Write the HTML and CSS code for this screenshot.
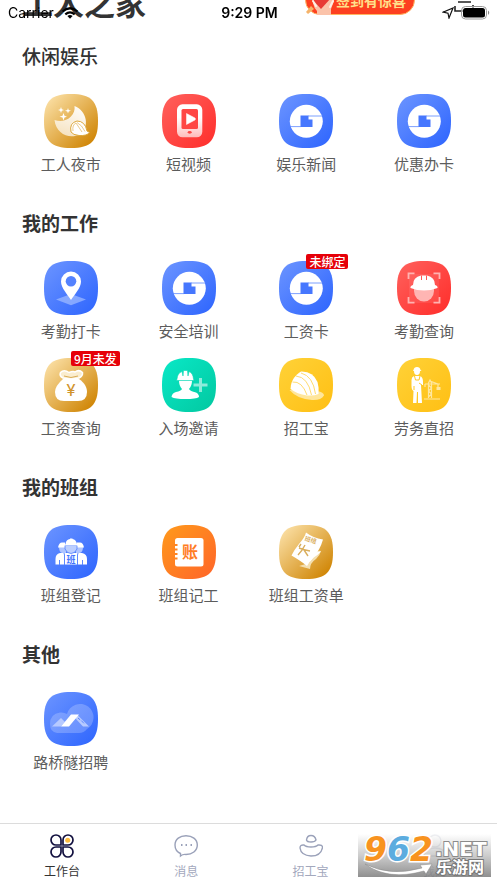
FILE: index.html
```html
<!DOCTYPE html>
<html lang="zh-CN">
<head>
  <meta charset="UTF-8">
  <meta name="viewport" content="width=device-width, initial-scale=1.0">
  <title>工人之家</title>
  <link rel="stylesheet" href="styles.css">
</head>
<body>

  <!-- Shared gradients and shapes -->
  <svg class="defs" aria-hidden="true">
    <defs>
      <linearGradient id="blue" x1="0" y1="0" x2="1" y2="1"><stop offset="0.1" stop-color="#6690ff"/><stop offset="0.9" stop-color="#3369fe"/></linearGradient>
      <linearGradient id="gold" x1="0" y1="0" x2="1" y2="1"><stop offset="0.1" stop-color="#f9dc9f"/><stop offset="0.9" stop-color="#d08606"/></linearGradient>
      <linearGradient id="red" x1="0" y1="0" x2="1" y2="1"><stop offset="0.1" stop-color="#ff5c58"/><stop offset="0.9" stop-color="#ff322f"/></linearGradient>
      <linearGradient id="green" x1="0" y1="0" x2="1" y2="1"><stop offset="0.1" stop-color="#08e5c3"/><stop offset="0.9" stop-color="#03cba4"/></linearGradient>
      <linearGradient id="yellow" x1="0" y1="0" x2="1" y2="1"><stop offset="0.1" stop-color="#ffd034"/><stop offset="0.9" stop-color="#ffc117"/></linearGradient>
      <linearGradient id="orange" x1="0" y1="0" x2="1" y2="1"><stop offset="0.1" stop-color="#ff951d"/><stop offset="0.9" stop-color="#ff6a28"/></linearGradient>
      <linearGradient id="fadeDown" x1="0" y1="0" x2="0" y2="1"><stop offset="0.4" stop-color="#fff"/><stop offset="1" stop-color="#fff" stop-opacity="0.65"/></linearGradient>
      <linearGradient id="fadeMoon" x1="1" y1="0" x2="0" y2="1"><stop offset="0" stop-color="#fff"/><stop offset="1" stop-color="#fff" stop-opacity="0.6"/></linearGradient>
      <linearGradient id="shade" x1="0" y1="0" x2="0" y2="1"><stop offset="0" stop-color="#fff"/><stop offset="0.5" stop-color="#c4c4c4"/><stop offset="1" stop-color="#7c7c7c"/></linearGradient>
      <path id="tile" d="M27 0C47 0 54 7 54 27S47 54 27 54 0 47 0 27 7 0 27 0Z"/>
      <g id="logo">
        <use href="#tile" fill="url(#blue)"/>
        <circle cx="27.3" cy="27.3" r="16.500" fill="#fff"/>
        <path d="M21.500 21.500H29.500V25.500H33.500V33H21.500Z" fill="#4677fe"/>
        <path d="M29 22H43.500M11 32.600H22" stroke="#5c88fe" stroke-width="0.800"/>
      </g>
    </defs>
  </svg>

  <!-- Phone status bar -->
  <div class="status">
    <div class="status-left">
      <span>Carrier</span>
      <svg width="18" height="12" viewBox="0 0 18 12" fill="none" stroke="#000" stroke-width="2.200"><path d="M1.500 4.500Q9-2 16.500 4.500M4.300 7.400Q9 3.500 13.700 7.400"/><path d="M6.400 9L9 11.800 11.600 9Q9 7 6.400 9Z" fill="#000" stroke="none"/></svg>
    </div>
    <span class="status-time">9:29 PM</span>
    <div class="status-right">
      <svg width="12" height="12" viewBox="0 0 12 12" fill="none" stroke="#111" stroke-width="1.200"><path d="M11 1L7 11 6 6.200 1 5.200Z"/></svg>
      <svg width="30" height="14" viewBox="0 0 30 14"><rect x="0.500" y="0.500" width="25" height="12.500" rx="4" fill="#fff" fill-opacity="0.5" stroke="#999"/><rect x="2" y="2" width="22" height="9.500" rx="2.500"/><path d="M27 4.500Q29.500 6.700 27 9Z" fill="#888"/></svg>
    </div>
  </div>

  <!-- Header, scrolled under the status bar -->
  <header class="header">
    <h1>工人之家</h1>
    <a class="sign" href="#sign">
      <svg class="sign-hand" width="30" height="30" viewBox="0 0 30 30"><path d="M0 27L5 21 8 24 2 29Z" fill="#f5b36a"/><path d="M7 18Q8 23 11 26V30H25V24L28 16 22 12Z" fill="#fbc3aa"/><path d="M5 13L15 24 25 13Z" fill="#e83a35"/><path d="M7 16L10 21M27 16L24 22" stroke="#fff0e5" stroke-width="2" stroke-linecap="round"/></svg>
      <span>签到有惊喜</span>
    </a>
    <button class="scan" type="button" aria-label="扫一扫">
      <svg width="36" height="20" viewBox="0 0 36 20" fill="none" stroke="#222" stroke-width="1.600"><path d="M5 8H18M2 12V17H12M20 11V17"/></svg>
    </button>
  </header>

  <main>
    <section class="section">
      <h2 class="light">休闲娱乐</h2>
      <div class="grid">
        <a class="item" href="#night">
          <svg class="icon" viewBox="0 0 54 54"><use href="#tile" fill="url(#gold)"/><path d="M30.500 12C43 17 46 33 36 40 26 46 12 40 10.500 26 21 30 32 22 30.500 12Z" fill="url(#fadeMoon)"/><path d="M17 13L17.800 15.200 20 16 17.800 16.700 17 19 16.200 16.700 14 16 16.200 15.200ZM24 14L24.700 16 27 16.700 24.700 17.400 24 19.500 23.300 17.400 21 16.700 23.300 16ZM19.500 19L20.500 21.800 23 22.700 20.500 23.600 19.500 26.500 18.500 23.600 15.500 22.700 18.500 21.800Z" fill="#fff"/><path d="M27 38Q25 29 33 27 41 27 43 37L45.500 38.500Q43 42 35 41.500 29 41 27 38Z" fill="#fff" stroke="#dda83d"/><path d="M29 37Q28 31 32 29L38 38M33 28.500Q38 31 41 37.500" fill="none" stroke="#e5be70" stroke-width="0.800"/></svg>
          <span>工人夜市</span>
        </a>
        <a class="item" href="#video">
          <svg class="icon" viewBox="0 0 54 54"><use href="#tile" fill="url(#red)"/><rect x="15" y="10.300" width="25.300" height="33" rx="5.500" fill="url(#fadeDown)"/><rect x="19.500" y="15" width="16.500" height="20" rx="1.500" fill="#ff4744"/><path d="M24.500 19.500V30.500L33 26Q34 25 33 24Z" fill="#fff" stroke="#fff" stroke-linejoin="round" stroke-width="0.500"/><ellipse cx="27.700" cy="38.300" rx="2" ry="1.400" fill="#ff4744"/></svg>
          <span>短视频</span>
        </a>
        <a class="item" href="#news">
          <svg class="icon" viewBox="0 0 54 54"><use href="#logo"/></svg>
          <span>娱乐新闻</span>
        </a>
        <a class="item" href="#offers">
          <svg class="icon" viewBox="0 0 54 54"><use href="#logo"/></svg>
          <span>优惠办卡</span>
        </a>
      </div>
    </section>

    <section class="section">
      <h2>我的工作</h2>
      <div class="grid">
        <a class="item" href="#checkin">
          <svg class="icon" viewBox="0 0 54 54"><use href="#tile" fill="url(#blue)"/><path d="M12 38.500L27 33 42 38.500 27 44.300Z" fill="#a3bdff" opacity="0.700"/><path d="M27 10.500A10 10 0 0 1 37 20.500C37 27 30 34 27 39 24 34 17 27 17 20.500A10 10 0 0 1 27 10.500Z" fill="#fff"/><circle cx="27" cy="20.300" r="5.300" fill="#5482fe"/></svg>
          <span>考勤打卡</span>
        </a>
        <a class="item" href="#training">
          <svg class="icon" viewBox="0 0 54 54"><use href="#logo"/></svg>
          <span>安全培训</span>
        </a>
        <a class="item" href="#card">
          <svg class="icon" viewBox="0 0 54 54"><use href="#logo"/></svg>
          <b class="badge">未绑定</b>
          <span>工资卡</span>
        </a>
        <a class="item" href="#attendance">
          <svg class="icon" viewBox="0 0 54 54"><use href="#tile" fill="url(#red)"/><rect x="12" y="13" width="30" height="29" fill="#fff" opacity="0.080"/><path d="M11.500 18V12.300H17.500M36.500 12.300H42.500V18M42.500 36V41.700H36.500M17.500 41.700H11.500V36" fill="none" stroke="#ffb3b1" stroke-width="1.800"/><path d="M17 28H37V30A10 10.500 0 0 1 17 30Z" fill="#ffb5b3"/><path d="M16 24Q16 16 24 14.500H30Q38 16 38 24 41 25 40.500 27 34 29.500 27 29.500T13.500 27Q13 25 16 24Z" fill="#fff"/><path d="M24.500 14.500V19M29.500 14.500V19" stroke="#ff5754"/></svg>
          <span>考勤查询</span>
        </a>
        <a class="item" href="#wages">
          <svg class="icon" viewBox="0 0 54 54"><use href="#tile" fill="url(#gold)"/><path d="M19 21H35C41 25 43 30 43 34Q43 43 34 43H20Q11 43 11 34 11 28 19 21Z" fill="#fff"/><path d="M19 20Q15 18 16.500 14.500 20 11 25 14.500 29 13 31 14 35 11 38.500 14.500 39 18 35 20 27 22 19 20Z" fill="#faedcf" stroke="#fff" stroke-width="1.500"/><path d="M20 18Q27 21 34 18" fill="none" stroke="#d9ac56"/><text class="yen" x="27" y="38">¥</text></svg>
          <b class="badge">9月未发</b>
          <span>工资查询</span>
        </a>
        <a class="item" href="#invite">
          <svg class="icon" viewBox="0 0 54 54"><use href="#tile" fill="url(#green)"/><path d="M17 22.500H30Q30 28 27 31 28 33 34 34.500 37 36 37 39 34 41 23.500 41T9.500 39Q10 35 14 34 19 33 20 31 17 28 17 22.500Z" fill="#fff"/><path d="M15 21Q15.500 15 20 13.500L21 18 21.500 12.500H25.500L26 18 27 13.500Q31 15 31.500 21L32 22.500H14.500Z" fill="#fff" stroke="#09d9b6" stroke-width="0.600"/><path d="M38.500 20V34M31.500 27H45.500" stroke="#fff" stroke-width="3" opacity="0.550"/></svg>
          <span>入场邀请</span>
        </a>
        <a class="item" href="#recruit">
          <svg class="icon" viewBox="0 0 54 54"><use href="#tile" fill="url(#yellow)"/><path d="M10.500 32Q24 32 38 33 45 34 45 37.500 42 42.500 33 42 18 41 10.500 32Z" fill="#ffe69b"/><path d="M11.500 31C12 21 17 17 22 13.500Q34 13 38.500 24 40 29 39.500 36 35 38 28 37.500 18 36 11.500 31Z" fill="#fff"/><path d="M13.500 24Q23 23 28 37M17 18Q29 19 32.500 37M22 15Q34 18 36.500 36" fill="none" stroke="#ffdb70"/></svg>
          <span>招工宝</span>
        </a>
        <a class="item" href="#labour">
          <svg class="icon" viewBox="0 0 54 54"><use href="#tile" fill="url(#yellow)"/><path d="M16.500 12Q17 9 20 9T23.500 12L24.500 13H23Q23 17 20 17T17 13H16Z" fill="#fff"/><path d="M17 18H23Q26 19 26 24V27L24 27 25 45H21V34H20L19.500 45H16L16.500 33Q14.500 32 14.500 28V22Q14.500 19 17 18Z" fill="#fff"/><path d="M17.500 18L18.500 22H22L23 18M17 28V32M22 25L25 27" fill="none" stroke="#ffc928"/><path d="M27 41H43M31.500 40V25L33 22 34.500 25V40M28 26H43M31.500 27L34.500 30 31.500 33 34.500 36 31.500 39M28 26V29M41 26V29M33 23L41 26" fill="none" stroke="#ffe79f" stroke-width="1.200"/><path d="M39.500 29H43.500V32H39.500Z" fill="#ffe79f"/></svg>
          <span>劳务直招</span>
        </a>
      </div>
    </section>

    <section class="section">
      <h2>我的班组</h2>
      <div class="grid">
        <a class="item" href="#team">
          <svg class="icon" viewBox="0 0 54 54"><use href="#tile" fill="url(#blue)"/><path d="M15 22H22V28H18Q15 27 15 22ZM32 22H39Q39 27 36 28H32Z" fill="#afc5ff"/><path d="M14 22.500Q15 17.500 18 17.500H21V22.500ZM40 22.500Q39 17.500 36 17.500H33V22.500ZM11.500 39.500V34Q11.500 29 16 28H38Q43 29 43 34V39.500Z" fill="#fff"/><path d="M21 20.500H33V24Q31 28.500 27 28.500T21 24Z" fill="#bccfff" stroke="#5080fe" stroke-width="0.800"/><path d="M21.500 19Q22 14.500 26 14V13.500H28.500V14Q32 14.500 33 19L34 20.500H20.500Z" fill="#fff"/><path d="M15.500 35V40M38.500 35V40M20 28L20.500 30V40M34 28L33.500 30V40" fill="none" stroke="#5b88ff"/><text class="team" x="27" y="38">班</text></svg>
          <span>班组登记</span>
        </a>
        <a class="item" href="#book">
          <svg class="icon" viewBox="0 0 54 54"><use href="#tile" fill="url(#orange)"/><rect x="13" y="13" width="28.500" height="28.500" rx="2.500" fill="#fff"/><path d="M12 20H15.500M12 24.500H15.500M12 29H15.500M12 33.500H15.500" stroke="#ff8523" stroke-width="2"/><text class="book" x="28" y="33">账</text></svg>
          <span>班组记工</span>
        </a>
        <a class="item" href="#payslip">
          <svg class="icon" viewBox="0 0 54 54"><use href="#tile" fill="url(#gold)"/><path d="M34 28Q38 25 42 26 41 30 37 34 31 38 31 44L20 41 30 38Z" fill="#f3dfb1"/><path d="M35 29Q38 26 42 26.500 39 30 34 33L28 40Z" fill="#fff"/><path d="M27 7.500Q34 13 44 14.500 41 25 34 33 30 37 28 41 22 36 12.500 30.500 15 25 20 19 26 12 27 7.500Z" fill="#fff"/><text class="slip" x="31" y="17" transform="rotate(18 31 17)">班组</text><path d="M20 23Q25 25 31 26M26 20Q23 26 19 30M25 25Q27 28 29 31M22 19L20 22" fill="none" stroke="#d9ae5d" stroke-width="1.400"/></svg>
          <span>班组工资单</span>
        </a>
      </div>
    </section>

    <section class="section">
      <h2>其他</h2>
      <div class="grid">
        <a class="item" href="#bridge">
          <svg class="icon" viewBox="0 0 54 54"><use href="#tile" fill="url(#blue)"/><path d="M13 41Q6 40 6 32 6 22 16 20.500 20 20 23 22A13.500 13.500 0 1 1 43 37Q40 41 35 41Z" fill="#fff" opacity="0.220"/><path d="M8 34.500L17 26 21 30 17 34.500Z" fill="#b7caff"/><path d="M33 22.500L45 34.500H39L31 26Z" fill="#b7caff"/><path d="M34 26L41 32" stroke="#5b86fe" stroke-dasharray="3 1.500"/><path d="M17 34.500L27 22.500H35L25 34.500Z" fill="#fff"/></svg>
          <span>路桥隧招聘</span>
        </a>
      </div>
    </section>
  </main>

  <!-- Bottom tabs -->
  <nav class="tabs">
    <a class="tab active" href="#work">
      <svg width="24" height="24" viewBox="0 0 24 24" fill="none" stroke="#12103f" stroke-width="1.700"><path d="M11 11H6A5 5 0 1 1 11 6ZM13 11V6A5 5 0 1 1 18 11ZM11 13V18A5 5 0 1 1 6 13ZM13 13H18A5 5 0 1 1 13 18Z"/><circle cx="17.700" cy="6.300" r="2.500" fill="#fdbc40" stroke="none"/></svg>
      <span>工作台</span>
    </a>
    <a class="tab" href="#messages">
      <svg width="24" height="24" viewBox="0 0 24 24" fill="none" stroke="#9aa1b9" stroke-width="1.400"><path d="M6.500 22V19.500C3 18 1 15 1 11 1 5 6 1.700 12 1.700S23.300 5 23.300 11 18 20.500 12 20.500Q9 20 6.500 22Z"/><path d="M7 11H8.500M11.500 11H13M16.500 11H18" stroke-width="2.200"/></svg>
      <span>消息</span>
    </a>
    <a class="tab" href="#jobs">
      <svg width="24" height="24" viewBox="0 0 24 24" fill="none" stroke="#9aa1b9" stroke-width="1.400"><path d="M7.500 6Q8 1.500 12 1.500T17 6Q16 8 12 8T7.500 6ZM1 14Q1 10.500 5 11 7 13 12 13T19 11Q23.500 10.500 23.500 13.500 22 22 12 22 2 21.500 1 14Z"/></svg>
      <span>招工宝</span>
    </a>
    <a class="tab" href="#me">
      <svg width="24" height="24" viewBox="0 0 24 24" fill="none" stroke="#9aa1b9" stroke-width="1.400"><circle cx="12" cy="7" r="6"/><path d="M1 22Q2 14 12 14T23 22Z"/></svg>
      <span>我的</span>
    </a>
    <svg class="watermark" width="133" height="43" viewBox="0 0 133 43">
      <rect width="133" height="43" fill="url(#shade)" opacity="0.850"/>
      <path d="M7 30Q32 43 64 34L62 31 74 30 68 40 66 37Q30 47 7 30Z" fill="#fff" stroke="#888" stroke-width="0.500"/>
      <text class="mark-num" x="6" y="27"><tspan fill="#f8931f">9</tspan><tspan fill="#5cacdf">6</tspan><tspan fill="#f8931f">2</tspan></text>
      <text class="mark-net" x="77" y="22">.NET</text>
      <text class="mark-name" x="78" y="39">乐游网</text>
    </svg>
  </nav>

</body>
</html>
```
FILE: styles.css
```css
* {
  box-sizing: border-box;
}

body {
  display: flex;
  flex-direction: column;
  min-height: 100vh;
  margin: 0;
  padding-bottom: 6px;
  background: #fff;
  color: #333;
  font-family: "Noto Sans CJK SC", sans-serif;
}

a {
  color: inherit;
  text-decoration: none;
}

svg {
  display: block;
}

.defs {
  position: absolute;
  width: 0;
  height: 0;
}

/* Status bar */
.status {
  position: fixed;
  top: 0;
  left: 0;
  right: 0;
  z-index: 2;
  display: grid;
  grid-template-columns: 1fr auto 1fr;
  align-items: center;
  height: 25px;
  padding: 0 6px 0 8px;
  color: #000;
  font-family: Inter, sans-serif;
  font-size: 14px;
}

.status-left,
.status-right {
  display: flex;
  align-items: center;
  gap: 7px;
}

.status-right {
  justify-content: flex-end;
}

.status-time {
  font-weight: 600;
}

/* Header */
.header {
  display: flex;
  align-items: flex-start;
  height: 66px;
  margin-top: -24px;
  padding: 0 8px 0 22px;
}

h1 {
  margin: 0;
  font-size: 31px;
  font-weight: bold;
  line-height: 52px;
}

.sign {
  display: flex;
  align-items: center;
  height: 30px;
  margin: 9px 38px 0 auto;
  padding-right: 8px;
  border: 1px solid #ffb560;
  border-radius: 16px;
  background: #fd4020;
  color: #ffe08a;
  font-size: 14px;
  font-weight: bold;
}

.scan {
  margin-top: 18px;
  padding: 0;
  border: 0;
  background: none;
}

/* Sections */
.section {
  margin-bottom: 34px;
  padding: 0 14px 0 12px;
}

h2 {
  margin: 0 0 24px;
  padding-left: 10px;
  font-size: 19px;
  font-weight: bold;
  line-height: 28px;
}

h2.light {
  font-weight: 500;
}

.grid {
  display: grid;
  grid-template-columns: repeat(4, 1fr);
  row-gap: 16px;
}

.item {
  position: relative;
  display: flex;
  flex-direction: column;
  align-items: center;
  gap: 5px;
  color: #5c5c5c;
  font-size: 15px;
  line-height: 22px;
  white-space: nowrap;
}

.icon {
  width: 54px;
  height: 54px;
}

.badge {
  position: absolute;
  top: -7px;
  left: 50%;
  padding: 0 3px;
  border-radius: 2px;
  background: #e60009;
  color: #fff;
  font-size: 12px;
  font-weight: 500;
  line-height: 15px;
}

.icon text {
  font-weight: bold;
  text-anchor: middle;
}

.icon .yen {
  fill: #d0932c;
  font-family: Roboto, sans-serif;
  font-size: 17px;
  font-weight: normal;
}

.icon .team {
  fill: #3f72fe;
  font-size: 9px;
}

.icon .book {
  fill: #ff7d24;
  font-size: 16px;
}

.icon .slip {
  fill: #d9ae5d;
  font-size: 6px;
}

/* Bottom tabs */
.tabs {
  position: relative;
  display: grid;
  grid-template-columns: repeat(4, 1fr);
  height: 54px;
  margin-top: auto;
  border-top: 1px solid #dcdcdc;
}

.tab {
  display: flex;
  flex-direction: column;
  align-items: center;
  gap: 4px;
  padding-top: 10px;
  color: #a3a8bd;
  font-size: 12px;
  line-height: 18px;
}

.tab.active {
  color: #333;
}

.watermark {
  position: absolute;
  right: 6px;
  bottom: 0;
}

.mark-num,
.mark-net {
  font-family: "DejaVu Sans", sans-serif;
  font-weight: bold;
  paint-order: stroke;
}

.mark-num {
  font-size: 33px;
  font-style: italic;
  stroke: #fff;
  stroke-width: 3px;
}

.mark-net {
  fill: #fff;
  font-size: 20px;
  stroke: #8b8b8b;
  stroke-width: 2px;
}

.mark-name {
  fill: #fff;
  font-size: 16px;
  font-weight: bold;
  paint-order: stroke;
  stroke: #777;
  stroke-width: 2px;
}
```
